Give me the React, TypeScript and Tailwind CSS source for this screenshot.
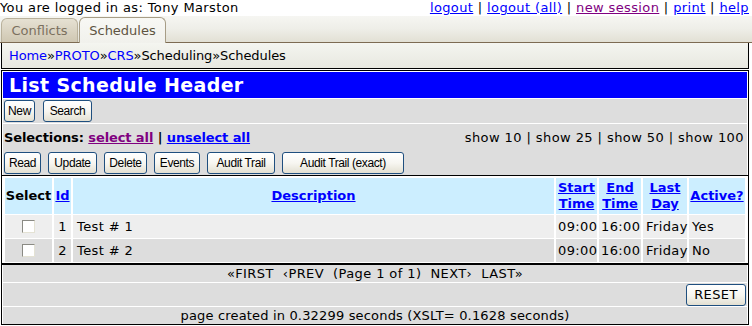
import React from "react";

const btn =
  "h-[22px] rounded-[3px] border border-[#1f4f7f] bg-linear-to-b from-white via-[#f7f6f1] to-[#e3e0d2] text-[12px] tracking-[-0.4px] text-black leading-none font-['Liberation_Sans',Arial,sans-serif] flex items-center justify-center shrink-0";

function Btn({ w, children }: { w: string; children: React.ReactNode }) {
  return <div className={`${btn} ${w}`}>{children}</div>;
}

function Check() {
  return (
    <span className="inline-block w-[13px] h-[13px] bg-white border border-[#8a8a84] border-r-[#e4e2d4] border-b-[#e4e2d4]" />
  );
}

const link = "text-[#0000ff] underline";

export default function App() {
  const cols = "grid grid-cols-[47px_17px_1fr_41px_42px_44px_56px] gap-x-[2px]";
  const rows = [
    { id: "1", d: "Test # 1", s: "09:00", e: "16:00", l: "Friday", a: "Yes", bg: "bg-[#eeeeee]" },
    { id: "2", d: "Test # 2", s: "09:00", e: "16:00", l: "Friday", a: "No", bg: "bg-[#dddddd]" },
  ];
  return (
    <div className="w-[752px] h-[326px] overflow-hidden bg-white font-['DejaVu_Sans',Verdana,sans-serif] text-[13px] text-black">
      {/* top line */}
      <div className="flex justify-between h-[16px] leading-[15px] pr-[3px] tracking-[0.38px]">
        <span>You are logged in as: Tony Marston</span>
        <span className="whitespace-pre">
          <span className={link}>logout</span>{" | "}
          <span className={link}>logout (all)</span>{" | "}
          <span className="text-[#800080] underline">new session</span>{" | "}
          <span className={link}>print</span>{" | "}
          <span className={link}>help</span>
        </span>
      </div>

      {/* tabs */}
      <div className="h-[27px] flex items-end pl-[1px] border-b border-[#7d6b52] bg-linear-to-b from-[#f6f6f2] via-[#eeeee8] to-[#e2e0d4]">
        <div className="w-[77px] h-[24px] rounded-t-[6px] border border-b-0 border-[#b9b19c] bg-linear-to-b from-[#e6e1d3] to-[#cfc7b2] text-[#7b705e] flex items-center justify-center">
          Conflicts
        </div>
        <div className="w-[87px] h-[26px] -mb-px ml-[1px] rounded-t-[6px] border border-b-0 border-[#a79d86] bg-linear-to-b from-[#f8f8f4] to-[#f1f1ec] text-[#5e5442] flex items-center justify-center">
          Schedules
        </div>
      </div>

      {/* breadcrumb */}
      <div className="ml-[1px] w-[748px] h-[26px] border-l border-r border-b border-black bg-linear-to-b from-[#f4f5f0] to-[#e8e8e0] pl-[7px] flex items-center tracking-[-0.1px]">
        <span className="text-[#0000ff]">Home</span>»<span className="text-[#0000ff]">PROTO</span>»
        <span className="text-[#0000ff]">CRS</span>»Scheduling»Schedules
      </div>

      {/* panel */}
      <div className="mt-[1px] ml-[1px] w-[748px] h-[255px] border border-black bg-white">
        <div className="px-[1px]">
          <div className="mt-[1px] h-[26px] bg-[#0000ff] text-white font-bold text-[19px] leading-[26px] pl-[6px] tracking-[0.35px]">
            List Schedule Header
          </div>
          <div className="mt-[1px] h-[24px] bg-[#dddddd] pt-[1px] pl-[1px] flex gap-[8px]">
            <Btn w="w-[31px]">New</Btn>
            <Btn w="w-[49px]">Search</Btn>
          </div>
          <div className="mt-[1px] h-[51px] bg-[#dddddd] pl-[1px] pr-[3px]">
            <div className="h-[24px] pt-[3px] flex justify-between items-center">
              <div className="font-bold whitespace-pre tracking-[-0.1px]">
                Selections: <span className="text-[#800080] underline">select all</span> |{" "}
                <span className={link}>unselect all</span>
              </div>
              <div className="whitespace-pre tracking-[0.42px]">show 10 | show 25 | show 50 | show 100</div>
            </div>
            <div className="mt-[4px] flex gap-[7px]">
              <Btn w="w-[37px]">Read</Btn>
              <Btn w="w-[49px]">Update</Btn>
              <Btn w="w-[43px]">Delete</Btn>
              <Btn w="w-[46px]">Events</Btn>
              <Btn w="w-[68px]">Audit Trail</Btn>
              <Btn w="w-[122px]">Audit Trail (exact)</Btn>
            </div>
          </div>
        </div>
        <div className="h-px bg-black" />
        <div className="px-[3px] pt-[2px] pb-[1px] bg-white flex flex-col gap-y-[1px]">
          <div className={`${cols} h-[36px] font-bold leading-[16px]`}>
            <div className="bg-[#cceeff] flex items-center justify-center">Select</div>
            <div className="bg-[#cceeff] flex items-center justify-center">
              <span className={link}>Id</span>
            </div>
            <div className="bg-[#cceeff] flex items-center justify-center">
              <span className={link}>Description</span>
            </div>
            <div className="bg-[#cceeff] flex items-center justify-center text-center">
              <span className={link}>
                Start
                <br />
                Time
              </span>
            </div>
            <div className="bg-[#cceeff] flex items-center justify-center text-center">
              <span className={link}>
                End
                <br />
                Time
              </span>
            </div>
            <div className="bg-[#cceeff] flex items-center justify-center text-center">
              <span className={link}>
                Last
                <br />
                Day
              </span>
            </div>
            <div className="bg-[#cceeff] flex items-center justify-center">
              <span className={link}>Active?</span>
            </div>
          </div>
          {rows.map((r) => (
            <div key={r.id} className={`${cols} h-[23px] tracking-[0.4px]`}>
              <div className={`${r.bg} flex items-center justify-center`}>
                <Check />
              </div>
              <div className={`${r.bg} flex items-center justify-center`}>{r.id}</div>
              <div className={`${r.bg} flex items-center pl-[4px]`}>{r.d}</div>
              <div className={`${r.bg} flex items-center pl-[2px]`}>{r.s}</div>
              <div className={`${r.bg} flex items-center pl-[2px]`}>{r.e}</div>
              <div className={`${r.bg} flex items-center pl-[3px]`}>{r.l}</div>
              <div className={`${r.bg} flex items-center pl-[3px]`}>{r.a}</div>
            </div>
          ))}
        </div>
        <div className="h-[2px] bg-black" />
        <div className="px-[1px]">
          <div className="h-[17px] bg-[#dddddd] flex items-center justify-center whitespace-pre leading-none tracking-[0.4px]">
            {"«FIRST  ‹PREV  (Page 1 of 1)  NEXT›  LAST»"}
          </div>
          <div className="mt-[1px] h-[23px] bg-[#dddddd] flex items-center justify-end pr-[1px]">
            <div className="h-[22px] w-[60px] rounded-[3px] border border-[#1f4f7f] bg-linear-to-b from-white via-[#f7f6f1] to-[#e3e0d2] text-[13px] leading-none tracking-[0.4px] flex items-center justify-center">
              RESET
            </div>
          </div>
          <div className="mt-[1px] h-[17px] bg-[#dddddd] flex items-center justify-center leading-none tracking-[0.17px]">
            page created in 0.32299 seconds (XSLT= 0.1628 seconds)
          </div>
        </div>
      </div>
    </div>
  );
}
